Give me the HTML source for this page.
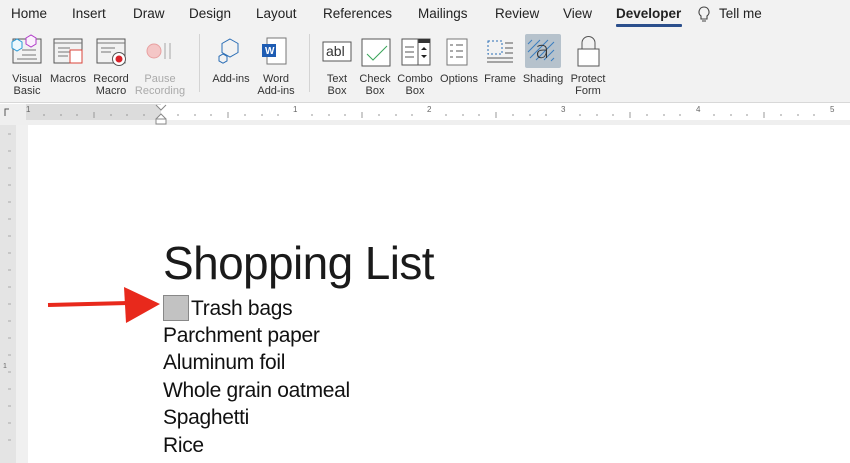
<!DOCTYPE html><html><head><style>
*{margin:0;padding:0;box-sizing:border-box}
body{width:850px;height:463px;overflow:hidden;background:#fff;font-family:"Liberation Sans",sans-serif;position:relative}
.abs{position:absolute}
#top{left:0;top:0;width:850px;height:103px;background:#f2f2f2;border-bottom:1px solid #d8d8d8}
.tab{position:absolute;top:6px;font-size:13.5px;color:#222}
.lbl{position:absolute;top:73px;font-size:11px;color:#333;text-align:center;line-height:12px;transform:translateX(-50%);white-space:nowrap}
.doc{font-family:"Liberation Sans",sans-serif;color:#111;position:absolute;left:163px;font-size:21px;letter-spacing:-0.3px}
</style></head><body>
<div id="top" class="abs">
<span class="tab" style="left:11px">Home</span>
<span class="tab" style="left:72px">Insert</span>
<span class="tab" style="left:133px">Draw</span>
<span class="tab" style="left:189px">Design</span>
<span class="tab" style="left:256px">Layout</span>
<span class="tab" style="left:323px">References</span>
<span class="tab" style="left:418px">Mailings</span>
<span class="tab" style="left:495px">Review</span>
<span class="tab" style="left:563px">View</span>
<span class="tab" style="left:616px;font-weight:bold">Developer</span>
<div class="abs" style="left:616px;top:24px;width:66px;height:3px;background:#2b4f8c;border-radius:1px"></div>
<svg class="abs" style="left:697px;top:6px" width="14" height="18"><path d="M7 1a5 5 0 0 0-3 9v3h6v-3a5 5 0 0 0-3-9zM5 15h4" fill="none" stroke="#444" stroke-width="1.1"/></svg>
<span class="tab" style="left:719px">Tell me</span>
<div class="abs" style="left:199px;top:34px;width:1px;height:58px;background:#d4d4d4"></div>
<div class="abs" style="left:309px;top:34px;width:1px;height:58px;background:#d4d4d4"></div>
<svg class="abs" style="left:0;top:30px" width="640" height="40" fill="none" stroke-width="1">
<rect x="13" y="9" width="28" height="24" stroke="#555"/><path d="M22 20h14M22 25h14M17 29h20" stroke="#777"/>
<path d="M12 12l5-3 5 3v6l-5 3-5-3z" stroke="#2a9bd8" fill="#eef8fd"/><path d="M26 8l5-3 5 3v6l-5 3-5-3z" stroke="#b03ac8" fill="#fbf0fd"/>
<rect x="54" y="9" width="28" height="24" stroke="#555"/><path d="M54 13h28M58 18h12M58 22h12M58 26h10" stroke="#777"/><rect x="70" y="20" width="12" height="13" stroke="#d9443b" fill="#fff"/>
<rect x="97" y="9" width="28" height="24" stroke="#555"/><path d="M97 13h28M101 18h14M101 22h10" stroke="#777"/><circle cx="119" cy="29" r="6.5" fill="#fff" stroke="#555"/><circle cx="119" cy="29" r="3.5" fill="#d8232a" stroke="none"/>
<circle cx="154" cy="21" r="7" stroke="#e8a0a0" fill="#f4c6c6"/><path d="M165 13v16M170 13v16" stroke="#ccc" stroke-width="2"/>
<path d="M230 9l8 4.5v9l-8 4.5-8-4.5v-9z" stroke="#2a6db5"/><path d="M223 24l4 2.3v4.6l-4 2.3-4-2.3v-4.6z" stroke="#2a6db5" fill="#f2f2f2"/>
<rect x="267" y="8" width="19" height="26" stroke="#777" fill="#fff"/><rect x="262" y="14" width="14" height="13" fill="#1e5cb3" stroke="none"/>
<rect x="323" y="12" width="28" height="19" stroke="#555" fill="#fff"/>
<rect x="362" y="9" width="28" height="27" stroke="#555" fill="#fff"/><path d="M367 24l6 6 14-14" stroke="#3aa55a"/>
<rect x="402" y="9" width="28" height="26" stroke="#555" fill="#fff"/><rect x="418" y="9" width="12" height="4" fill="#333" stroke="none"/><path d="M418 9v26M405 17h9M405 22h9M405 27h9" stroke="#555"/><path d="M421 20l3-3 3 3zM421 25l3 3 3-3z" fill="#222" stroke="none"/>
<rect x="447" y="9" width="20" height="26" stroke="#777" fill="#fff"/><path d="M450 15h3M456 15h7M450 21h3M456 21h7M450 27h3M456 27h7" stroke="#555"/>
<rect x="488" y="11" width="14" height="13" stroke="#2a6db5" stroke-dasharray="2 2"/><path d="M505 13h8M505 18h8M505 23h8M487 28h26M487 32h26" stroke="#555"/>
<rect x="525" y="4" width="36" height="34" rx="2" fill="#b6c2cc" stroke="none"/>
<path d="M532 10l-4 4M540 10l-12 12M548 10l-18 18M554 12l-18 18M554 20l-10 10M554 28l-3 3" stroke="#3a7dc0"/>
<rect x="578" y="19" width="21" height="17" stroke="#555" fill="#fff"/><path d="M582 19v-6a6.5 6.5 0 0 1 13 0v6" stroke="#555"/>
</svg>
<span class="abs" style="left:326px;top:43px;font-size:14px;color:#333">abl</span>
<span class="abs" style="left:265px;top:46px;font-size:10px;color:#fff;font-weight:bold">W</span>
<span class="abs" style="left:535px;top:36px;font-size:24px;color:#333;font-family:'DejaVu Sans',sans-serif;font-weight:200">a</span>
<div class="lbl" style="left:27px">Visual<br>Basic</div>
<div class="lbl" style="left:68px">Macros</div>
<div class="lbl" style="left:111px">Record<br>Macro</div>
<div class="lbl" style="left:160px;color:#aaa">Pause<br>Recording</div>
<div class="lbl" style="left:231px">Add-ins</div>
<div class="lbl" style="left:276px">Word<br>Add-ins</div>
<div class="lbl" style="left:337px">Text<br>Box</div>
<div class="lbl" style="left:375px">Check<br>Box</div>
<div class="lbl" style="left:415px">Combo<br>Box</div>
<div class="lbl" style="left:459px">Options</div>
<div class="lbl" style="left:500px">Frame</div>
<div class="lbl" style="left:543px">Shading</div>
<div class="lbl" style="left:588px">Protect<br>Form</div>
</div>
<div class="abs" style="left:0;top:104px;width:850px;height:21px;background:#efefef"></div>
<div class="abs" style="left:26px;top:104px;width:824px;height:16px;background:#fff"></div>
<div class="abs" style="left:26px;top:104px;width:135px;height:16px;background:#dcdcdc"></div>
<svg class="abs" style="left:0;top:104px" width="850" height="22">
<path d="M5 12V5h4" fill="none" stroke="#555"/>
<g stroke="#999">
<path d="M44 10v2M61 10v2M77 10v2M94 10v2M111 10v2M127 10v2M144 10v2M178 10v2M195 10v2M211 10v2M245 10v2M262 10v2M278 10v2M312 10v2M329 10v2M345 10v2M379 10v2M396 10v2M412 10v2M446 10v2M463 10v2M479 10v2M513 10v2M530 10v2M546 10v2M580 10v2M597 10v2M613 10v2M647 10v2M664 10v2M680 10v2M714 10v2M731 10v2M747 10v2M781 10v2M798 10v2M814 10v2"/>
<path d="M94 8v6M228 8v6M362 8v6M496 8v6M630 8v6M764 8v6"/>
</g>
<g font-size="8" fill="#666" font-family="Liberation Sans"><text x="26" y="8">1</text><text x="293" y="8">1</text><text x="427" y="8">2</text><text x="561" y="8">3</text><text x="696" y="8">4</text><text x="830" y="8">5</text></g>
<path d="M156 1l5 5 5-5M156 15l5-5 5 5" fill="#fff" stroke="#888"/><rect x="156" y="15" width="10" height="5" fill="#fff" stroke="#888"/>
</svg>
<div class="abs" style="left:0;top:125px;width:16px;height:338px;background:#e4e4e4"></div>
<div class="abs" style="left:16px;top:125px;width:12px;height:338px;background:#f0f0f0"></div>
<svg class="abs" style="left:0;top:125px" width="16" height="338"><g stroke="#aaa"><path d="M8 9h3M8 26h3M8 43h3M8 60h3M8 77h3M8 94h3M8 111h3M8 128h3M8 145h3M8 162h3M8 179h3M8 196h3M8 213h3M8 230h3M8 247h3M8 264h3M8 281h3M8 298h3M8 315h3"/></g><text x="3" y="243" font-size="7" fill="#666">1</text></svg>
<div class="doc" style="top:236px;font-size:46px;letter-spacing:-0.6px;color:#1a1a1a">Shopping List</div>
<div class="abs" style="left:163px;top:295px;width:26px;height:26px;background:#c2c2c2;border:1.5px solid #888"></div>
<div class="doc" style="left:191px;top:297px">Trash bags</div>
<div class="doc" style="top:324px">Parchment paper</div>
<div class="doc" style="top:351px">Aluminum foil</div>
<div class="doc" style="top:379px">Whole grain oatmeal</div>
<div class="doc" style="top:406px">Spaghetti</div>
<div class="doc" style="top:434px">Rice</div>
<svg class="abs" style="left:40px;top:282px" width="125" height="45"><path d="M8 23L90 21" stroke="#e8291c" stroke-width="4"/><path d="M84 5L120 22L86 41z" fill="#e8291c"/></svg>
</body></html>
